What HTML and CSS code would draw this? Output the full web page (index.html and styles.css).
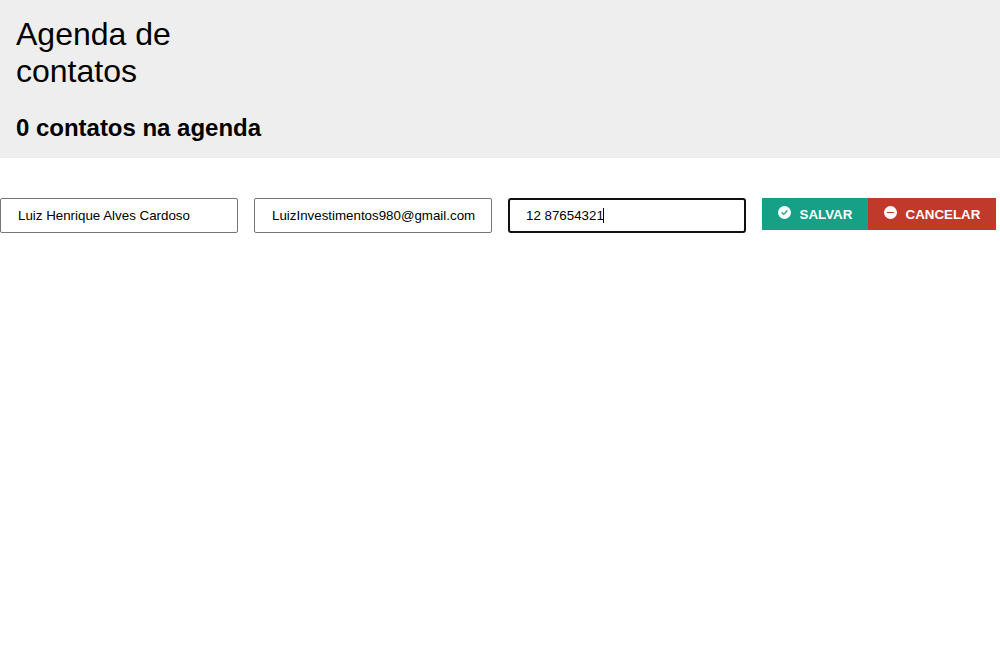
FILE: index.html
```html
<!DOCTYPE html>
<html lang="pt-BR">
<head>
<meta charset="utf-8">
<title>Agenda de contatos</title>
<link rel="stylesheet" href="styles.css">
</head>
<body>
<header class="header">
  <h1 class="title">Agenda de contatos</h1>
  <h2 class="count">0 contatos na agenda</h2>
</header>
<form class="form">
  <div class="field">Luiz Henrique Alves Cardoso</div>
  <div class="field">LuizInvestimentos980@gmail.com</div>
  <div class="field field-focus">12 87654321<span class="caret"></span></div>
  <div class="actions">
    <button type="button" class="btn save"><svg class="icon" viewBox="0 0 13 13"><circle cx="6.5" cy="6.5" r="6.5" fill="#fff"/><path d="M3.6 6.3 5.7 8.4 9.4 4.5" fill="none" stroke="#16a085" stroke-width="1.3"/></svg>SALVAR</button>
    <button type="button" class="btn cancel"><svg class="icon" viewBox="0 0 13 13"><circle cx="6.5" cy="6.5" r="6.5" fill="#fff"/><path d="M3 6.5h7" fill="none" stroke="#c0392b" stroke-width="1"/></svg>CANCELAR</button>
  </div>
</form>
</body>
</html>
```
FILE: styles.css
```css
* { box-sizing: border-box; margin: 0; padding: 0; }
body { font-family: "Liberation Sans", Arial, sans-serif; background: #fff; color: #000; }
.header { background: #eee; padding: 16px; height: 158px; }
.title { width: 200px; font-size: 32px; line-height: 37px; font-weight: 400; }
.count { margin-top: 24px; font-size: 24px; line-height: 28px; font-weight: 700; letter-spacing: -0.02px; }
.form { display: flex; gap: 16px; margin-top: 40px; align-items: flex-start; }
.field { display: flex; align-items: center; width: 238px; height: 35px; padding: 0 17px; border: 1px solid #767676; border-radius: 2px; font-size: 13.333px; white-space: nowrap; }
.field-focus { border: 2px solid #101010; border-radius: 3px; padding: 0 16px; }
.caret { width: 1px; height: 15px; margin-left: -1px; background: #000; }
.actions { display: flex; }
.btn { display: flex; align-items: center; height: 32px; padding: 0 16px; border: 0; color: #fff; font: 700 13.333px "Liberation Sans", Arial, sans-serif; }
.save { width: 106px; background: #16a085; }
.cancel { width: 128px; background: #c0392b; }
.icon { flex: none; width: 13px; height: 13px; margin: -3px 8.5px 0 0; }
```
